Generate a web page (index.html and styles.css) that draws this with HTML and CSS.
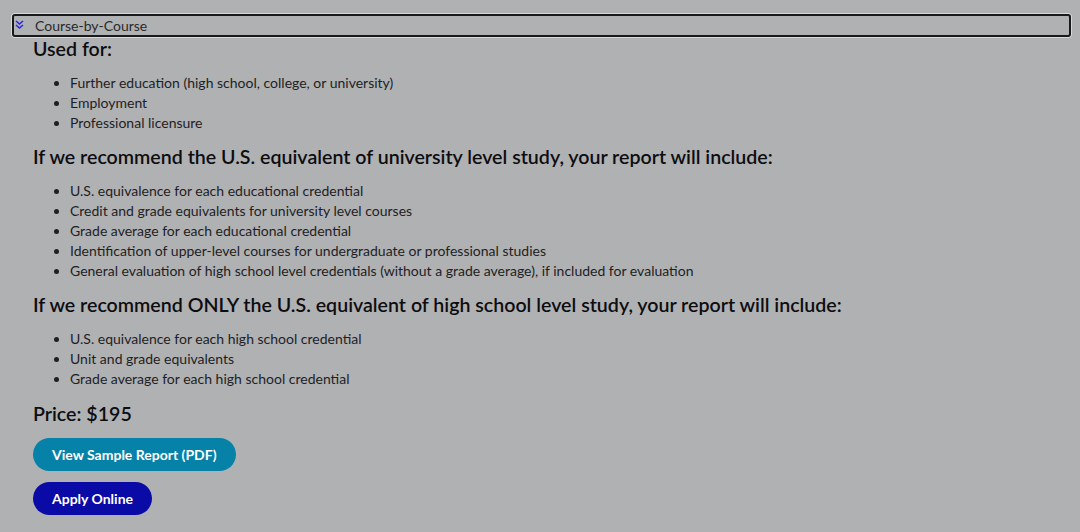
FILE: index.html
```html
<!DOCTYPE html>
<html lang="en">
<head>
<meta charset="utf-8">
<title>Course-by-Course</title>
<link rel="stylesheet" href="styles.css">
</head>
<body>
<details class="acc" open>
  <summary class="acc-head">
    <svg class="chev" width="9" height="9" viewBox="0 0 9 9" aria-hidden="true"><path d="M1 1 L4.5 4 L8 1 M1 5 L4.5 8 L8 5" fill="none" stroke="#2a2adb" stroke-width="1.6"/></svg>
    <span>Course-by-Course</span>
  </summary>
  <div class="acc-body">
    <h3 class="h">Used for:</h3>
    <ul class="list">
      <li>Further education (high school, college, or university)</li>
      <li>Employment</li>
      <li>Professional licensure</li>
    </ul>
    <h3 class="h">If we recommend the U.S. equivalent of university level study, your report will include:</h3>
    <ul class="list">
      <li>U.S. equivalence for each educational credential</li>
      <li>Credit and grade equivalents for university level courses</li>
      <li>Grade average for each educational credential</li>
      <li>Identification of upper-level courses for undergraduate or professional studies</li>
      <li>General evaluation of high school level credentials (without a grade average), if included for evaluation</li>
    </ul>
    <h3 class="h">If we recommend ONLY the U.S. equivalent of high school level study, your report will include:</h3>
    <ul class="list">
      <li>U.S. equivalence for each high school credential</li>
      <li>Unit and grade equivalents</li>
      <li>Grade average for each high school credential</li>
    </ul>
    <h3 class="h price">Price: $195</h3>
    <div class="actions">
      <a class="btn btn-teal" href="#">View Sample Report (PDF)</a>
      <a class="btn btn-navy" href="#">Apply Online</a>
    </div>
  </div>
</details>
</body>
</html>
```

FILE: styles.css
```css
html, body {
  margin: 0;
  padding: 0;
  background: #b0b1b3;
}
body {
  padding: 14px 9px 0 12px;
  font-family: "Lato", "Liberation Sans", sans-serif;
  color: #1e1e24;
}
.acc-head {
  list-style: none;
  display: flex;
  align-items: center;
  gap: 11px;
  height: 19px;
  padding: 0 0 0 1px;
  border: 2px solid #1a1a1a;
  border-radius: 3px;
  box-shadow: 0 0 0 1px #d8d8d8;
  font-size: 14px;
  color: #2a2a2a;
  cursor: pointer;
}
.acc-head::-webkit-details-marker { display: none; }
.chev { flex: none; margin-top: -2px; }
.acc-body {
  padding: 0 0 0 21px;
}
.h {
  margin: 0;
  font-size: 19.6px;
  font-weight: 600;
  line-height: 24px;
  color: #0d0d10;
}
.list {
  margin: 12px 0 12px;
  padding: 0 0 0 37px;
  font-size: 14px;
  line-height: 20px;
}
.price { margin-top: 13px; }
.actions {
  display: flex;
  flex-direction: column;
  align-items: flex-start;
  gap: 11px;
  margin-top: 12px;
}
.btn {
  display: inline-flex;
  align-items: center;
  height: 33px;
  padding: 0 19px;
  border-radius: 17px;
  color: #fff;
  font-size: 14px;
  font-weight: 700;
  text-decoration: none;
}
.btn-teal { background: #0681a8; }
.btn-navy { background: #0a0aa6; }
```
